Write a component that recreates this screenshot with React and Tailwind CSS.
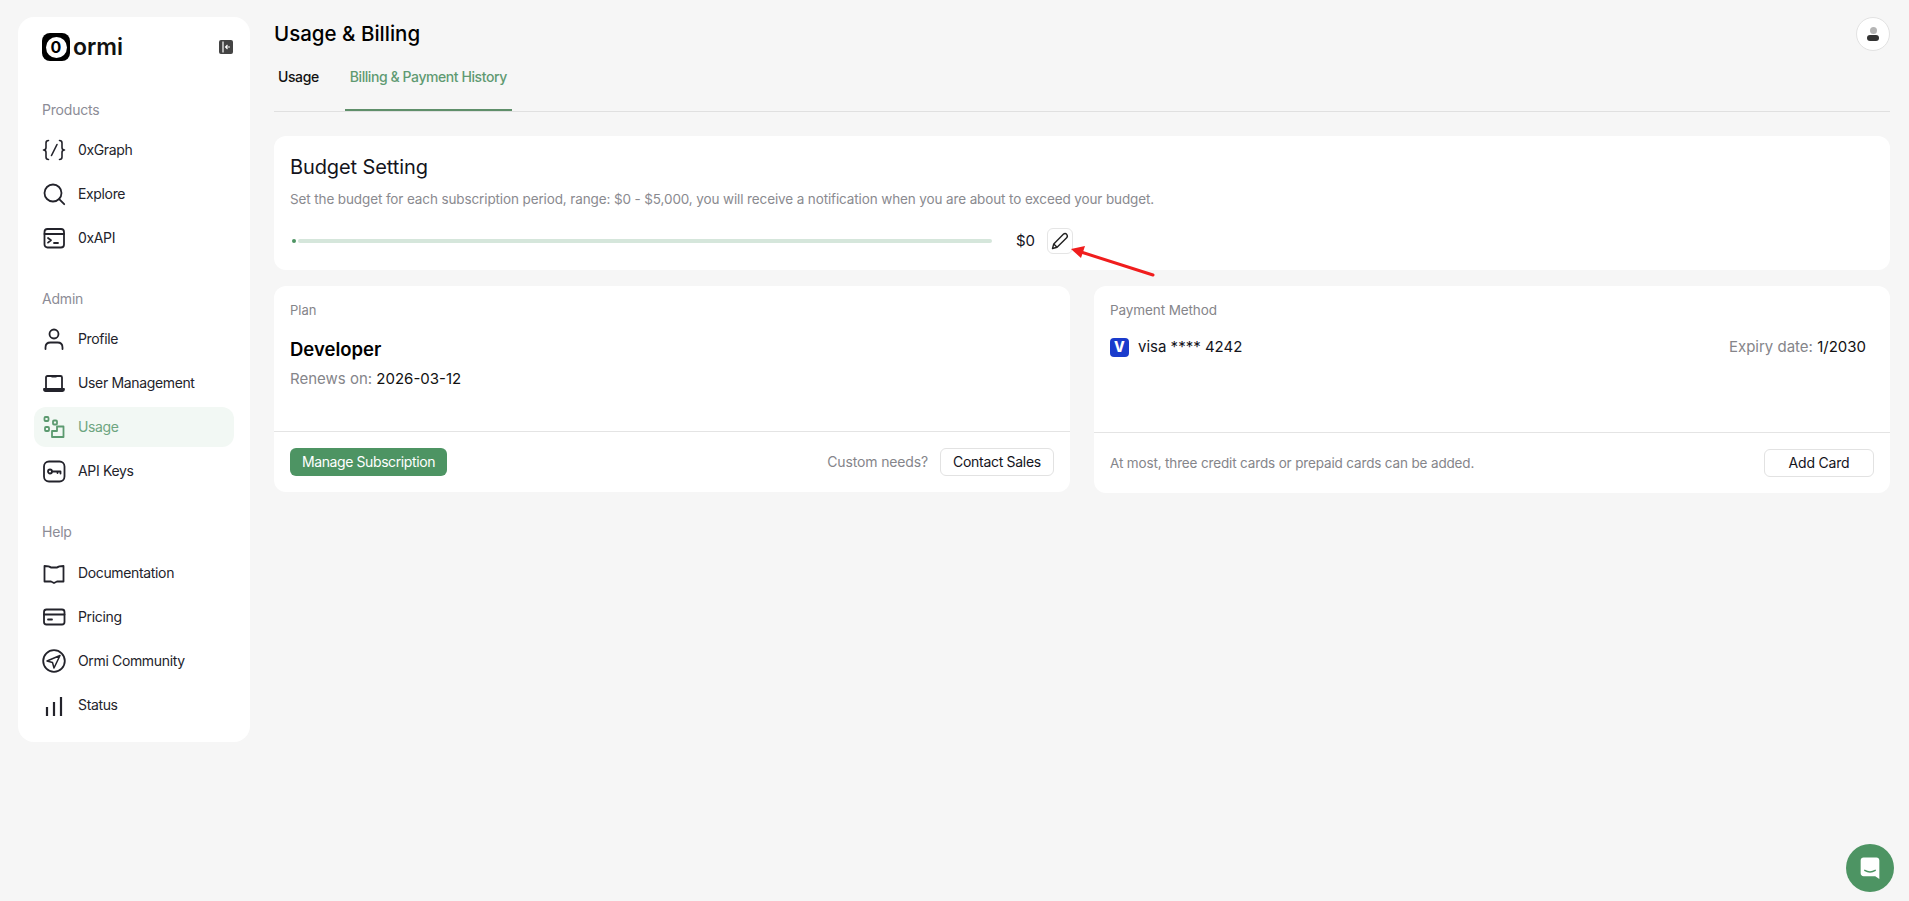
import React from "react";

const IconBase = ({ children, className = "" }) => (
  <svg
    viewBox="0 0 24 24"
    fill="none"
    stroke="currentColor"
    strokeWidth="1.8"
    strokeLinecap="round"
    strokeLinejoin="round"
    className={`w-6 h-6 shrink-0 ${className}`}
  >
    {children}
  </svg>
);

const GraphIcon = () => (
  <IconBase>
    <path d="M6.500 2.500C4.500 2.500 4 3.500 4 5v4.500c0 1.500-.8 2.500-2.500 2.500C3.200 12 4 13 4 14.500V19c0 1.500.5 2.500 2.500 2.500" strokeWidth="1.600" />
    <path d="M17.500 2.500c2 0 2.500 1 2.500 2.500v4.500c0 1.500.8 2.500 2.500 2.500-1.700 0-2.500 1-2.500 2.500V19c0 1.500-.5 2.500-2.500 2.500" strokeWidth="1.600" />
    <path d="M15 6.500 9.500 17.500" strokeWidth="1.600" />
  </IconBase>
);

const SearchIcon = () => (
  <IconBase>
    <circle cx="11" cy="11" r="8.500" />
    <path d="m17.200 17.200 5 5" />
  </IconBase>
);

const TerminalIcon = () => (
  <IconBase>
    <rect x="2.500" y="3" width="19.500" height="18.500" rx="3" />
    <path d="M2.500 8h19.500" />
    <path d="m6 12 3 2.300-3 2.300" />
    <path d="M12 17h4" />
  </IconBase>
);

const UserIcon = () => (
  <IconBase>
    <circle cx="12" cy="7" r="4.500" />
    <path d="M3.500 22v-1.500c0-3 2-5 5-5h7c3 0 5 2 5 5V22" />
  </IconBase>
);

const LaptopIcon = () => (
  <IconBase>
    <path d="M4 17V6.500C4 5.500 4.500 5 5.500 5h13c1 0 1.500.5 1.500 1.500V17" />
    <path d="M2 18h20v.500c0 1-.5 1.500-1.500 1.500h-17C2.500 20 2 19.500 2 18.500z" />
    <path d="M10 5.500h4" />
  </IconBase>
);

const UsageIcon = () => (
  <IconBase className="text-[#5c9a70]">
    <rect x="2.500" y="2" width="4" height="4" rx="1" />
    <rect x="11" y="5.500" width="4" height="4" rx="1" />
    <rect x="3" y="12" width="4" height="4" rx="1" />
    <path d="M10 22v-6h5v-4.500h6.500V22z" />
  </IconBase>
);

const KeyIcon = () => (
  <IconBase>
    <rect x="2" y="2.500" width="20.500" height="20" rx="5" />
    <circle cx="8" cy="12.500" r="2" />
    <path d="M10 12.500h8.500v2M15.500 12.500v1.500" />
  </IconBase>
);

const BookIcon = () => (
  <IconBase>
    <path d="M2.500 5c2.500 0 5 .2 6.500 1.500h6C16.500 5.200 19 5 21.500 5v15.500H15l-3 1.500-3-1.500H2.500z" />
  </IconBase>
);

const CardIcon = () => (
  <IconBase>
    <rect x="2" y="4.500" width="20.500" height="15" rx="2.500" />
    <path d="M2 9.500h20.500" />
    <path d="M6 14.500h4" />
  </IconBase>
);

const TelegramIcon = () => (
  <IconBase>
    <circle cx="12" cy="12" r="10.800" />
    <path d="M18 6.500 5 12l5.500 1.500 1.500 5.500z" strokeWidth="1.500" />
  </IconBase>
);

const BarsIcon = () => (
  <IconBase>
    <path d="M5 14v9M12 9v14M19 4v19" strokeWidth="2.200" strokeLinecap="butt" />
  </IconBase>
);

const PencilIcon = () => (
  <svg viewBox="0 0 24 24" fill="none" stroke="#222" strokeWidth="1.700" strokeLinejoin="round" className="w-5 h-5">
    <path d="M3 21l1.500-5.500L16 4c1.300-1.300 3-1.300 4 0s1.300 2.700 0 4L8.500 19.500z" />
    <path d="M4.500 15.500l4 4" />
  </svg>
);

const NavRow = ({ icon, label, active }) => (
  <div className="h-11 py-0.5">
    <div
      className={`h-10 mx-4 pl-2 flex items-center gap-3 rounded-xl text-sm tracking-[-0.35px] ${
        active ? "bg-[#f2f8f4] text-[#6ea580]" : "text-[#23232b]"
      }`}
    >
      {icon}
      <span>{label}</span>
    </div>
  </div>
);

const NavLabel = ({ children, className = "" }) => (
  <div className={`pl-6 h-5 leading-5 text-sm tracking-[-0.2px] text-[#8c8c96] ${className}`}>{children}</div>
);

const Sidebar = () => (
  <aside className="w-[232px] h-[725px] shrink-0 mt-[17px] ml-[18px] bg-white rounded-2xl pt-4">
    <div className="flex items-center justify-between pl-6 pr-[17px] h-7">
      <div className="flex items-center gap-[3px]">
        <div className="w-7 h-7 bg-black rounded-lg flex items-center justify-center">
          <div className="w-[21px] h-[21px] bg-white rounded-full flex items-center justify-center text-[16px] font-bold text-black leading-none">
            0
          </div>
        </div>
        <span className="text-[23px] leading-7 font-semibold text-[#111]">ormi</span>
      </div>
      <svg viewBox="0 0 14 14" className="w-3.5 h-3.5">
        <rect width="14" height="14" rx="2" fill="#444" />
        <path d="M4 1.500v11" stroke="#fff" strokeWidth="1.200" />
        <path d="M11 7H6.500M8.500 5 6.500 7l2 2" stroke="#fff" strokeWidth="1.100" fill="none" />
      </svg>
    </div>

    <NavLabel className="mt-[39px] mb-2">Products</NavLabel>
    <NavRow icon={<GraphIcon />} label="0xGraph" />
    <NavRow icon={<SearchIcon />} label="Explore" />
    <NavRow icon={<TerminalIcon />} label="0xAPI" />

    <NavLabel className="mt-[29px] mb-2">Admin</NavLabel>
    <NavRow icon={<UserIcon />} label="Profile" />
    <NavRow icon={<LaptopIcon />} label="User Management" />
    <NavRow icon={<UsageIcon />} label="Usage" active />
    <NavRow icon={<KeyIcon />} label="API Keys" />

    <NavLabel className="mt-[29px] mb-[9px]">Help</NavLabel>
    <NavRow icon={<BookIcon />} label="Documentation" />
    <NavRow icon={<CardIcon />} label="Pricing" />
    <NavRow icon={<TelegramIcon />} label="Ormi Community" />
    <NavRow icon={<BarsIcon />} label="Status" />
  </aside>
);

const BudgetCard = () => (
  <section className="relative h-[134px] bg-white rounded-xl px-4 pt-[17px]">
    <h2 className="text-xl leading-7 tracking-[-0.1px] text-[#14141c]">Budget Setting</h2>
    <p className="mt-2 text-[13.5px] leading-5 tracking-[-0.12px] text-[#8a8a8f]">
      Set the budget for each subscription period, range: $0 - $5,000, you will receive a notification when you are
      about to exceed your budget.
    </p>
    <div className="mt-[19px] flex items-center h-[26px]">
      <div className="w-[702px] flex items-center pl-0.5 gap-0.5">
        <div className="w-1 h-1 rounded-full bg-[#4d9463]"></div>
        <div className="flex-1 h-1 rounded-full bg-[#d5e6db]"></div>
      </div>
      <span className="ml-6 w-[19px] text-[15px] text-[#14141c]">$0</span>
      <button className="ml-3 w-[26px] h-[26px] rounded-md border border-[#e5e5e5] flex items-center justify-center">
        <PencilIcon />
      </button>
    </div>
    {/* red annotation arrow over the card edge */}
    <svg viewBox="0 0 90 32" className="absolute left-[795px] top-[110px] w-[90px] h-8">
      <path d="M84 29 12 6" stroke="#f01d1d" strokeWidth="3" strokeLinecap="round" />
      <path d="M2 3 16 0 12 12z" fill="#f01d1d" />
    </svg>
  </section>
);

const PlanCard = () => (
  <section className="bg-white rounded-xl h-[206px] flex flex-col">
    <div className="h-[145px] px-4 pt-3.5">
      <div className="text-[13px] leading-5 text-[#85858a]">Plan</div>
      <div className="mt-[15px] text-[18.5px] leading-7 font-semibold text-black">Developer</div>
      <div className="mt-1 text-[15px] leading-6 text-[#85858a]">
        Renews on: <span className="text-[#111]">2026-03-12</span>
      </div>
    </div>
    <div className="flex-1 border-t border-[#e4e4e4] px-4 pt-4 flex items-start justify-between">
      <button className="h-7 w-[157px] rounded-md bg-[#4d9463] text-sm tracking-[-0.4px] text-white">
        Manage Subscription
      </button>
      <div className="flex items-center gap-3">
        <span className="text-sm tracking-[-0.15px] text-[#85858a]">Custom needs?</span>
        <button className="h-7 w-[114px] rounded-md border border-[#e2e2e2] text-sm tracking-[-0.3px] text-[#14141c]">
          Contact Sales
        </button>
      </div>
    </div>
  </section>
);

const PaymentCard = () => (
  <section className="bg-white rounded-xl h-[207px] flex flex-col">
    <div className="h-[146px] pl-4 pr-6 pt-3.5">
      <div className="text-[13.5px] leading-5 tracking-[-0.1px] text-[#85858a]">Payment Method</div>
      <div className="mt-[15px] flex items-center justify-between h-6">
        <div className="flex items-center gap-[9px]">
          <div className="w-[19px] h-[19px] rounded-[4px] bg-[#1a3bcc] flex items-center justify-center text-white text-[14px] leading-none font-extrabold">
            V
          </div>
          <span className="text-[15px] text-[#14141c]">visa **** 4242</span>
        </div>
        <div className="text-[15px] text-[#85858a]">
          Expiry date: <span className="text-[#111]">1/2030</span>
        </div>
      </div>
    </div>
    <div className="flex-1 border-t border-[#e4e4e4] px-4 pt-4 flex items-start justify-between">
      <span className="text-[13.5px] leading-7 tracking-[-0.15px] text-[#85858a]">
        At most, three credit cards or prepaid cards can be added.
      </span>
      <button className="h-7 w-[110px] rounded-md border border-[#e2e2e2] text-sm tracking-[-0.2px] text-[#14141c]">
        Add Card
      </button>
    </div>
  </section>
);

export default function App() {
  return (
    <div className="relative flex min-h-screen h-[901px] overflow-hidden bg-[#f6f6f6] font-['Inter',sans-serif]">
      <Sidebar />

      <main className="flex-1 ml-6 mr-[19px] pt-[17px]">
        <header className="h-[34px] flex items-center justify-between">
          <h1 className="text-[20.5px] font-medium text-black">Usage &amp; Billing</h1>
          <div className="w-[34px] h-[34px] rounded-full bg-white border border-[#e2e2e2] flex flex-col items-center justify-center">
            <div className="w-[7px] h-[7px] rounded-full bg-[#b5b5b5]"></div>
            <div className="w-[12px] h-[6px] mt-px rounded-[3px] bg-[#333]"></div>
          </div>
        </header>

        <nav className="flex gap-[22px] border-b border-[#e0e0e0] h-[61px]">
          <div className="px-1 pt-4 text-sm leading-5 tracking-[-0.4px] font-medium text-[#111]">Usage</div>
          <div className="px-[5px] pt-4 h-[60px] text-sm leading-5 tracking-[-0.42px] font-medium text-[#5f9a72] border-b-2 border-[#5f8f6a]">
            Billing &amp; Payment History
          </div>
        </nav>

        <div className="mt-6 flex flex-col gap-4">
          <BudgetCard />
          <div className="grid grid-cols-2 gap-6 items-start">
            <PlanCard />
            <PaymentCard />
          </div>
        </div>
      </main>

      {/* chat launcher */}
      <div className="fixed right-[15px] bottom-[9px] w-12 h-12 rounded-full bg-[#4d9463] flex items-center justify-center">
        <svg viewBox="0 0 24 24" className="w-7 h-7">
          <path d="M4 5.500C4 4 5 3 6.500 3h11C19 3 20 4 20 5.500V21.500l-3.500-2.500H6.500C5 19 4 18 4 16.500z" fill="#fff" />
          <path d="M7.500 14c2.800 1.700 6.200 1.700 9 0" stroke="#4d9463" strokeWidth="1.200" fill="none" strokeLinecap="round" />
        </svg>
      </div>
    </div>
  );
}
